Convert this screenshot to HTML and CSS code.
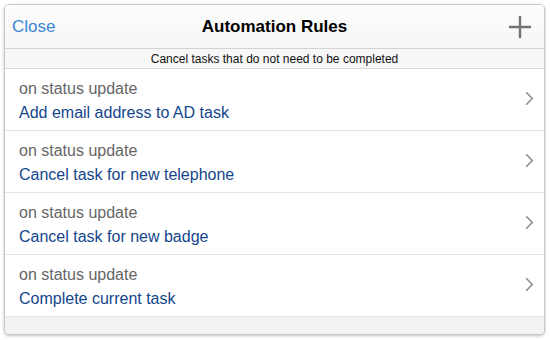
FILE: index.html
```html
<!DOCTYPE html>
<html>
<head>
<meta charset="utf-8">
<link rel="stylesheet" href="styles.css">
</head>
<body>
<div class="panel">
  <div class="header">
    <span class="close">Close</span>
    <span class="title">Automation Rules</span>
    <span class="add"><svg width="24" height="24" viewBox="0 0 24 24"><path d="M12 1V23M1 12H23" stroke="#737373" stroke-width="2.4" fill="none"/></svg></span>
  </div>
  <div class="sub">Cancel tasks that do not need to be completed</div>
  <div class="list">
    <div class="row"><div class="text"><div class="event">on status update</div><div class="name">Add email address to AD task</div></div><svg class="chev" width="9" height="15" viewBox="0 0 9 15"><path d="M1.2 1.2L7.3 7.5L1.2 13.8" stroke="#8a8a8a" stroke-width="1.5" fill="none"/></svg></div>
    <div class="row"><div class="text"><div class="event">on status update</div><div class="name">Cancel task for new telephone</div></div><svg class="chev" width="9" height="15" viewBox="0 0 9 15"><path d="M1.2 1.2L7.3 7.5L1.2 13.8" stroke="#8a8a8a" stroke-width="1.5" fill="none"/></svg></div>
    <div class="row"><div class="text"><div class="event">on status update</div><div class="name">Cancel task for new badge</div></div><svg class="chev" width="9" height="15" viewBox="0 0 9 15"><path d="M1.2 1.2L7.3 7.5L1.2 13.8" stroke="#8a8a8a" stroke-width="1.5" fill="none"/></svg></div>
    <div class="row"><div class="text"><div class="event">on status update</div><div class="name">Complete current task</div></div><svg class="chev" width="9" height="15" viewBox="0 0 9 15"><path d="M1.2 1.2L7.3 7.5L1.2 13.8" stroke="#8a8a8a" stroke-width="1.5" fill="none"/></svg></div>
  </div>
  <div class="footer"></div>
</div>
</body>
</html>
```
FILE: styles.css
```css
html, body { margin: 0; padding: 0; background: #fff; }
body { padding: 4px; font-family: "Liberation Sans", Arial, sans-serif; }
.panel {
  width: 539px;
  height: 329px;
  border: 1px solid #c8c8c8;
  border-radius: 5px;
  box-shadow: 0 1px 3px rgba(0,0,0,0.25);
  overflow: hidden;
  display: flex;
  flex-direction: column;
  background: #fff;
}
.header {
  height: 43px;
  display: flex;
  align-items: center;
  justify-content: space-between;
  padding: 0 12px 0 7px;
  background: linear-gradient(#fdfdfd, #f6f6f6);
  border-bottom: 1px solid #d4d4d4;
  position: relative;
}
.close { color: #3b86d6; font-size: 17px; }
.title {
  position: absolute; left: 0; right: 0; text-align: center;
  font-size: 17px; font-weight: bold; color: #000; pointer-events: none;
}
.add { display: flex; margin-top: 1px; }
.sub {
  height: 19px;
  line-height: 20px;
  text-align: center;
  font-size: 12px;
  color: #111;
  background: #f7f7f7;
  border-bottom: 1px solid #d8d8d8;
}
.list { display: flex; flex-direction: column; }
.row {
  height: 61px;
  border-bottom: 1px solid #e4e4e4;
  display: flex;
  align-items: center;
  justify-content: space-between;
  padding: 0 10px 0 14px;
}
.text { display: flex; flex-direction: column; gap: 6px; margin-top: 3px; }
.event { font-size: 16px; color: #666; line-height: 18px; }
.name { font-size: 16px; color: #14468c; line-height: 18px; }
.chev { margin-top: -3px; }
.footer { flex: 1; background: #f3f3f5; }
```
